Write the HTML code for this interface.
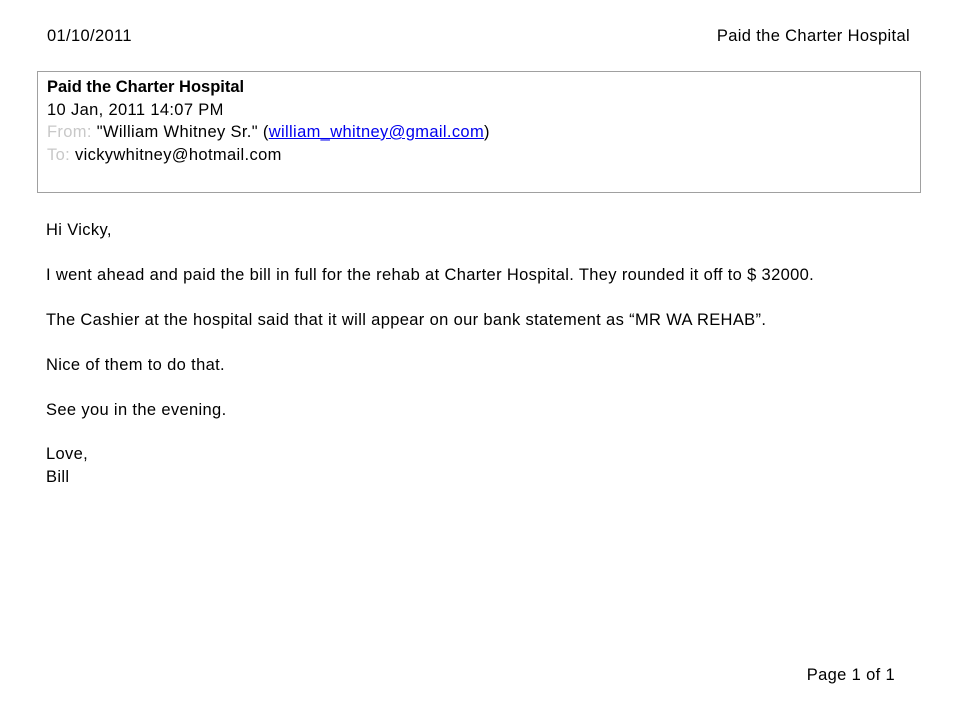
<!DOCTYPE html>
<html><head><meta charset="utf-8"><style>
body{margin:0;width:960px;height:720px;background:#fff;position:relative;font-family:"Liberation Sans",Arial,sans-serif;font-size:16.5px;color:#000;letter-spacing:0.35px;overflow:hidden}
.t{position:absolute;white-space:nowrap;line-height:19px}
.box{position:absolute;left:37px;top:71px;width:882px;height:120px;border:1px solid #a0a0a0}
.g{color:#c8c8c8}
a{color:#0000ee;text-decoration:underline}
</style></head><body>
<div class="t" style="left:47px;top:27px">01/10/2011</div>
<div class="t" style="right:50px;top:27px">Paid the Charter Hospital</div>
<div class="box"></div>
<div class="t" style="left:47px;top:78px;font-weight:bold;letter-spacing:0">Paid the Charter Hospital</div>
<div class="t" style="left:47px;top:101px">10 Jan, 2011 14:07 PM</div>
<div class="t" style="left:47px;top:123px"><span class="g">From:</span> "William Whitney Sr." (<a>william_whitney@gmail.com</a>)</div>
<div class="t" style="left:47px;top:146px"><span class="g">To:</span> vickywhitney@hotmail.com</div>
<div class="t" style="left:46px;top:221px">Hi Vicky,</div>
<div class="t" style="left:46px;top:266px">I went ahead and paid the bill in full for the rehab at Charter Hospital. They rounded it off to $ 32000.</div>
<div class="t" style="left:46px;top:311px">The Cashier at the hospital said that it will appear on our bank statement as “MR WA REHAB”.</div>
<div class="t" style="left:46px;top:356px">Nice of them to do that.</div>
<div class="t" style="left:46px;top:401px">See you in the evening.</div>
<div class="t" style="left:46px;top:445px">Love,</div>
<div class="t" style="left:46px;top:468px">Bill</div>
<div class="t" style="right:65px;top:666px">Page 1 of 1</div>
</body></html>
